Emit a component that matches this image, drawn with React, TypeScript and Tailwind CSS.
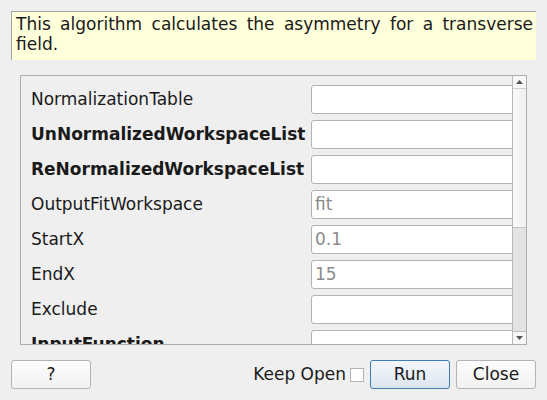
import React from 'react';

const font = { fontFamily: '"DejaVu Sans", sans-serif' };

interface Row {
  label: string;
  bold?: boolean;
  placeholder?: string;
}

const rows: Row[] = [
  { label: 'NormalizationTable' },
  { label: 'UnNormalizedWorkspaceList', bold: true },
  { label: 'ReNormalizedWorkspaceList', bold: true },
  { label: 'OutputFitWorkspace', placeholder: 'fit' },
  { label: 'StartX', placeholder: '0.1' },
  { label: 'EndX', placeholder: '15' },
  { label: 'Exclude' },
  { label: 'InputFunction', bold: true },
];

const QtButton: React.FC<{ children: React.ReactNode; primary?: boolean; className?: string }> = ({ children, primary, className }) => (
  <button
    className={`h-[29px] w-[80px] rounded-[3px] border text-[17px] text-[#1a1a1a] ${
      primary
        ? 'border-[#3d7db3] bg-gradient-to-b from-[#f3f7fb] to-[#dce5ee]'
        : 'border-[#b4b4b4] bg-gradient-to-b from-[#fdfdfd] to-[#f1f1f1]'
    } ${className ?? ''}`}
  >
    {children}
  </button>
);

export default function App() {
  return (
    <div className="flex h-[400px] w-[547px] flex-col bg-[#efefef] text-[#1a1a1a]" style={font}>
      {/* description */}
      <div className="ml-[11px] mt-[11px] h-[49px] w-[525px] border-l border-t border-[#a3a3a3] bg-[#ffffdc] pl-[4px] pr-[3px] pt-[2px]">
        <p className="text-justify text-[17px] leading-[20px]">
          This algorithm calculates the asymmetry for a transverse field.
        </p>
      </div>

      {/* properties */}
      <div className="ml-[20px] mt-[15px] flex h-[270px] w-[507px] border border-[#adadad]">
        <div className="relative flex-1 overflow-hidden">
          <div className="flex flex-col gap-[6px] pl-[10px] pt-[9px]">
            {rows.map(r => (
              <div key={r.label} className="flex h-[29px] items-center">
                <span className={`w-[280px] shrink-0 text-[17px] ${r.bold ? 'font-bold' : ''}`}>{r.label}</span>
                <div className="flex h-[29px] w-[230px] shrink-0 items-center rounded-[3px] border border-[#b3b3b3] bg-white pl-[3px] text-[17px] text-[#8a8a8a]">
                  {r.placeholder}
                </div>
              </div>
            ))}
          </div>
        </div>
        {/* scrollbar */}
        <div className="flex w-[14px] flex-col border-l border-[#b8b8b8] bg-[#e3e3e3]">
          <div className="flex h-[13px] items-center justify-center border-b border-[#d0d0d0] bg-[#f7f7f7]">
            <svg width="7" height="4" viewBox="0 0 7 4"><path d="M3.5 0L7 4H0z" fill="#555" /></svg>
          </div>
          <div className="h-[139px] border-b border-[#c4c4c4] bg-gradient-to-r from-[#fafafa] to-[#f0f0f0]" />
          <div className="flex-1" />
          <div className="flex h-[13px] items-center justify-center border-t border-[#bdbdbd] bg-[#f7f7f7]">
            <svg width="7" height="4" viewBox="0 0 7 4"><path d="M0 0H7L3.5 4z" fill="#555" /></svg>
          </div>
        </div>
      </div>

      {/* buttons */}
      <div className="mt-[15px] flex items-center px-[11px]">
        <QtButton>?</QtButton>
        <div className="flex-1" />
        <span className="text-[17px]">Keep Open</span>
        <span className="ml-[4px] h-[14px] w-[14px] border border-[#b3b3b3] bg-white" />
        <QtButton primary className="ml-[6px]">Run</QtButton>
        <QtButton className="ml-[6px]">Close</QtButton>
      </div>
    </div>
  );
}
